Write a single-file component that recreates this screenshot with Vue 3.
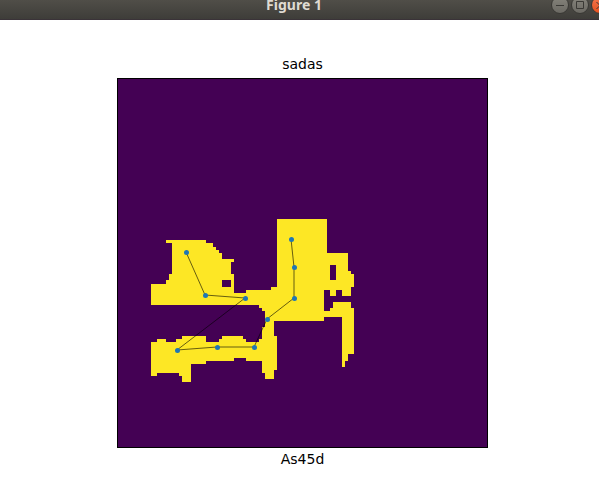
<script setup>
const region = [
  'M166 240H206V243H213V247H216V250H219V253H222V259H234V262H231V274H234V293H246V290H271V287H277V219H327V253H348V271H351V274H354V287H351V296H342V290H336V296H330V290H324V311H330V308H333V302H351V308H354V354H348V361H345V367H342V317H324V321H274V336H277V370H274V379H265V373H262V361H246V358H234V361H206V364H191V382H182V376H179V373H157V376H151V342H157V339H166V342H176V339H182V336H206V342H219V339H222V336H243V339H246V342H259V339H262V327H265V311H262V308H259V305H151V284H166V280H169V274H172V243H166Z',
  'M222 280H231V287H222Z',
  'M330 265H336V280H330Z',
].join('')

const points = [
  [186, 252],
  [205, 295],
  [245, 298],
  [177, 350],
  [217, 347],
  [254, 347],
  [267, 319],
  [294, 298],
  [294, 267],
  [291, 239],
]
const path = points.map((p) => p.join(',')).join(' ')
</script>

<template>
  <div class="window">
    <header class="titlebar">
      <h1 class="caption">Figure 1</h1>
      <div class="controls">
        <button class="control" type="button" aria-label="Minimize">
          <svg viewBox="0 0 18 18"><path d="M5 9.5H13" /></svg>
        </button>
        <button class="control" type="button" aria-label="Maximize">
          <svg viewBox="0 0 18 18"><path d="M5.5 5.5H12.5V12.5H5.5Z" /></svg>
        </button>
        <button class="control close" type="button" aria-label="Close">
          <svg viewBox="0 0 18 18"><path d="M5.5 6L12.5 13M12.5 6L5.5 13" /></svg>
        </button>
      </div>
    </header>
    <main class="canvas">
      <figure class="plot">
        <h2 class="label">sadas</h2>
        <svg class="axes" viewBox="117 78 371 370" role="img" aria-label="sadas">
          <rect x="117" y="78" width="371" height="370" fill="#440154" />
          <path :d="region" fill="#fde725" fill-rule="evenodd" shape-rendering="crispEdges" />
          <polyline :points="path" fill="none" stroke="#000" stroke-width="0.6" />
          <circle v-for="(p, i) in points" :key="i" :cx="p[0] + 0.5" :cy="p[1] + 0.5" r="2.5" fill="#1f77b4" />
          <rect x="117.5" y="78.5" width="370" height="369" fill="none" stroke="#000" />
        </svg>
        <figcaption class="label">As45d</figcaption>
      </figure>
    </main>
  </div>
</template>

<style>
body {
  background: #fff;
}
</style>

<style scoped>
.window {
  overflow: hidden;
}
.titlebar {
  position: relative;
  display: flex;
  justify-content: center;
  height: 20px;
  box-sizing: border-box;
  padding-right: 11px;
  background: linear-gradient(#504e48, #3e3d39);
  border-bottom: 1px solid #3a3338;
}
.caption {
  margin: 0;
  font: bold 14px/10px "Noto Sans", "Open Sans", sans-serif;
  color: #dfdbd2;
}
.controls {
  position: absolute;
  top: -4px;
  right: -10px;
  display: flex;
  gap: 2px;
}
.control {
  width: 18px;
  height: 18px;
  padding: 0;
  border: 1px solid #3a3935;
  border-radius: 50%;
  background: linear-gradient(#85837b, #6b6963);
}
.control svg {
  display: block;
  width: 18px;
  height: 18px;
  margin: -1px;
  fill: none;
  stroke: #3a3935;
}
.close {
  background: linear-gradient(#f3764e, #e6521f);
}
.canvas {
  display: flex;
  justify-content: center;
  padding: 34px 0 24px 6px;
}
.plot {
  flex: 0 1 371px;
  margin: 0;
  text-align: center;
}
.label {
  margin: 0;
  font: 14px/20px "DejaVu Sans", sans-serif;
  color: #000;
}
.axes {
  display: block;
  width: 100%;
  margin: 4px 0 1px;
}
</style>
